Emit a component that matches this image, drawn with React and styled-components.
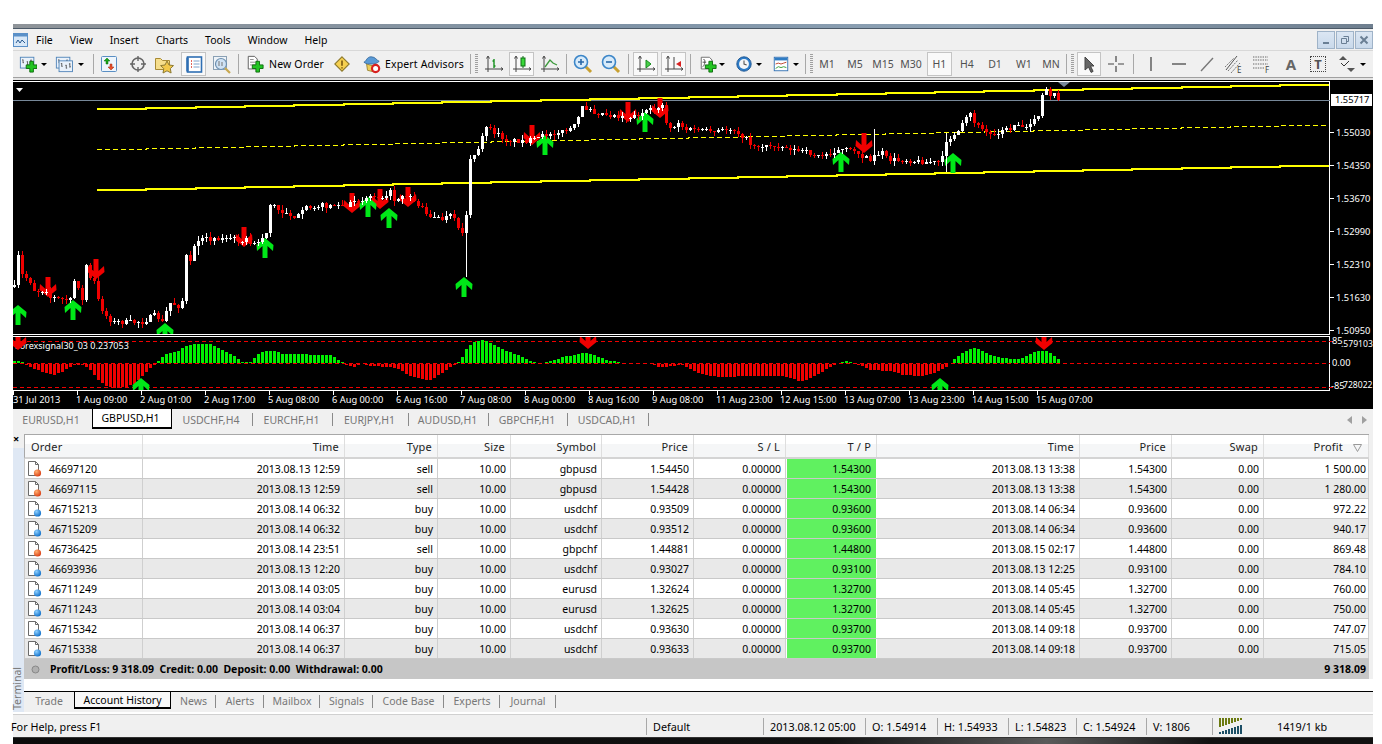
import React from 'react';
import styled, { createGlobalStyle } from 'styled-components';

const GlobalStyle = createGlobalStyle`
  html, body { margin: 0; padding: 0; background: #fff; }
  body { font-family: "Noto Sans", "Open Sans", sans-serif; font-size: 10.5px; color: #000; }
`;

const FONT = '"Noto Sans", "Open Sans", sans-serif';

const Page = styled.div`
  width: 1382px;
  height: 744px;
  box-sizing: border-box;
  padding: 24px 9px 0 13px;
  background: #fff;
  overflow: hidden;
`;

const TopStrip = styled.div`
  height: 4px;
  background: linear-gradient(90deg, #8f9499 0%, #7f93a6 45%, #8ea3b6 70%, #6f7f8f 100%);
  border-bottom: 1px solid #4c5a68;
`;

const MenuBar = styled.div`
  height: 21px;
  display: flex;
  align-items: center;
  background: #f0f0f0;
  border-bottom: 1px solid #d8d8d8;
`;

const AppIcon = styled.div`
  width: 15px;
  height: 18px;
  flex: none;
  margin-right: 8px;
`;

const MenuItem = styled.span`
  font-size: 10.5px;
  margin-right: 17px;
  color: #000;
`;

const WindowBtns = styled.div`
  margin-left: auto;
  display: flex;
  gap: 1px;
`;

const WindowBtn = styled.div`
  width: 18px;
  height: 18px;
  display: flex;
  align-items: center;
  justify-content: center;
  background: linear-gradient(#dbe6f3, #c9d9eb);
  border: 1px solid #9fb3c8;
  box-sizing: border-box;
`;

const Toolbar = styled.div`
  height: 26px;
  display: flex;
  align-items: center;
  background: #f0f0f0;
  border-bottom: 1px solid #a0a0a0;
  box-shadow: 0 2px 0 #e4e4e4;
  margin-bottom: 2px;
`;

const Slot = styled.div`
  width: ${(p) => p.$w}px;
  height: 24px;
  flex: none;
  display: flex;
  align-items: center;
  justify-content: center;
  box-sizing: border-box;
  border: 1px solid ${(p) => (p.$pressed ? '#c4c4c4' : 'transparent')};
  background: ${(p) => (p.$pressed ? '#f9f9f9' : 'transparent')};
`;

const Gap = styled.div`
  width: ${(p) => p.$w}px;
  flex: none;
`;

const Sep = styled.div`
  width: ${(p) => p.$w}px;
  height: 20px;
  flex: none;
  display: flex;
  justify-content: center;
  &::after {
    content: '';
    width: 1px;
    background: #a8a8a8;
  }
`;

const Grip = styled.div`
  width: ${(p) => p.$w}px;
  height: 20px;
  flex: none;
  display: flex;
  justify-content: center;
  &::after {
    content: '';
    width: 3px;
    background: repeating-linear-gradient(#a0a0a0 0 1px, transparent 1px 2px);
  }
`;

const Caret = styled.div`
  width: ${(p) => p.$w}px;
  flex: none;
  display: flex;
  justify-content: center;
  &::after {
    content: '';
    border-left: 3px solid transparent;
    border-right: 3px solid transparent;
    border-top: 3px solid #000;
  }
`;

const ToolLabel = styled.span`
  width: ${(p) => p.$w}px;
  flex: none;
  font-size: 10.5px;
  letter-spacing: 0.15px;
  white-space: nowrap;
`;

const Period = styled(Slot)`
  font-size: 10.5px;
  color: #505050;
`;

const ChartSvg = styled.svg`
  display: block;
  width: 1360px;
  height: 328px;
  background: #000;
`;

const TabRow = styled.div`
  height: 22px;
  display: flex;
  align-items: stretch;
  background: #f0f0f0;
  border-top: 1px solid #000;
  box-sizing: border-box;
`;

const ChartTab = styled.div`
  width: ${(p) => p.$w}px;
  flex: none;
  display: flex;
  align-items: center;
  justify-content: center;
  box-sizing: border-box;
  padding-right: 3px;
  color: ${(p) => (p.$active ? '#000' : '#777')};
  background: ${(p) => (p.$active ? '#fff' : 'transparent')};
  border: ${(p) => (p.$active ? '1px solid #000' : 'none')};
  border-top: none;
  border-bottom-width: ${(p) => (p.$active ? '2px' : '0')};
  height: ${(p) => (p.$active ? '20px' : 'auto')};
  position: relative;
  ${(p) =>
    p.$sep &&
    `&::after {
      content: '';
      position: absolute;
      right: 0;
      top: 4px;
      height: 13px;
      width: 1px;
      background: #8a8a8a;
    }`}
`;

const ScrollArrows = styled.div`
  margin-left: auto;
  display: flex;
  gap: 10px;
  align-items: center;
  padding-right: 6px;
`;

const ScrollArrow = styled.div`
  width: 0;
  height: 0;
  border-top: 4px solid transparent;
  border-bottom: 4px solid transparent;
  ${(p) => (p.$left ? 'border-right: 5px solid #a0a0a0;' : 'border-left: 5px solid #a0a0a0;')}
`;

const Terminal = styled.div`
  display: flex;
  height: 282px;
  background: #f0f0f0;
`;

const Gutter = styled.div`
  width: 11px;
  flex: none;
  display: flex;
  flex-direction: column;
`;

const CloseMark = styled.div`
  height: 18px;
  box-sizing: border-box;
  padding-top: 3px;
  font-size: 11px;
  font-weight: 700;
  line-height: 11px;
  color: #000;
`;

const GutterBody = styled.div`
  flex: 1;
  background: #dfe8f4;
  display: flex;
  align-items: flex-end;
`;

const GutterText = styled.span`
  writing-mode: vertical-rl;
  transform: rotate(180deg);
  font-size: 10.5px;
  color: #777;
  line-height: 9px;
  padding-top: 2px;
`;

const TermMain = styled.div`
  flex: 1;
  display: flex;
  flex-direction: column;
  padding-top: 4px;
`;

const GRID = '118px 202px 93px 73px 91px 92px 92px 91px 203px 92px 92px 105px';

const HeadRow = styled.div`
  width: 1345px;
  height: 25px;
  box-sizing: border-box;
  display: grid;
  grid-template-columns: ${GRID};
  border-top: 1px solid #a8a8a8;
  border-left: 1px solid #a8a8a8;
  border-bottom: 2px solid #d4d4d4;
  background: linear-gradient(#fff 0 40%, #f5f6f7 40% 100%);
`;

const HeadCell = styled.div`
  display: flex;
  align-items: center;
  justify-content: ${(p) => (p.$left ? 'flex-start' : 'flex-end')};
  padding: ${(p) => (p.$left ? '0 0 0 6px' : `0 ${p.$pr || 5}px 0 0`)};
  border-right: 1px solid #dedede;
  font-size: 11px;
  color: #222;
  letter-spacing: 0.2px;
  position: relative;
`;

const SortMark = styled.svg`
  position: absolute;
  right: 6px;
  top: 9px;
`;

const Row = styled.div`
  width: 1345px;
  height: 20px;
  box-sizing: border-box;
  display: grid;
  grid-template-columns: ${GRID};
  background: ${(p) => (p.$alt ? '#e9e9e9' : '#fff')};
  border-bottom: 1px solid #c9c9c9;
  border-left: 1px solid #c9c9c9;
`;

const Cell = styled.div`
  display: flex;
  align-items: center;
  justify-content: flex-end;
  padding-right: ${(p) => p.$pr || 4}px;
  border-right: 1px solid #cfcfcf;
  white-space: nowrap;
`;

const OrderCell = styled(Cell)`
  justify-content: flex-start;
  padding: 0 0 0 2px;
  gap: 7px;
`;

const TpCell = styled(Cell)`
  background: #60f160;
  border-right: 1px solid #fff;
  border-left: 1px solid #fff;
  padding-right: 5px;
`;

const TotalRow = styled.div`
  width: 1345px;
  height: 20px;
  box-sizing: border-box;
  display: flex;
  align-items: center;
  gap: 10px;
  padding: 0 3px 0 7px;
  background: #c6c6c6;
  font-weight: 700;
  font-size: 10.5px;
`;

const TotalRight = styled.span`
  margin-left: auto;
`;

const Filler = styled.div`
  height: 12px;
  background: #fff;
`;

const TermTabs = styled.div`
  height: 21px;
  display: flex;
  border-top: 1px solid #000;
  box-sizing: border-box;
  background: #f0f0f0;
`;

const TermTab = styled.div`
  width: ${(p) => p.$w}px;
  height: ${(p) => (p.$active ? '17px' : '18px')};
  flex: none;
  display: flex;
  align-items: center;
  justify-content: center;
  box-sizing: border-box;
  color: ${(p) => (p.$active ? '#000' : '#777')};
  background: ${(p) => (p.$active ? '#f8f8f8' : 'transparent')};
  ${(p) => p.$active && 'border: 1px solid #000; border-top: none; border-bottom-width: 2px;'}
  position: relative;
  ${(p) =>
    p.$sep &&
    `&::after {
      content: '';
      position: absolute;
      right: 0;
      top: 3px;
      height: 13px;
      width: 1px;
      background: #8a8a8a;
    }`}
`;

const StatusBar = styled.div`
  height: 23px;
  margin-top: 2px;
  display: flex;
  align-items: center;
  background: #f0f0f0;
  border-top: 1px solid #d0d0d0;
  box-sizing: border-box;
`;

const StatusCell = styled.div`
  width: ${(p) => p.$w}px;
  height: 17px;
  flex: ${(p) => (p.$grow ? 1 : 'none')};
  display: flex;
  align-items: center;
  gap: 34px;
  box-sizing: border-box;
  border-left: ${(p) => (p.$first ? 'none' : '1px solid #a8a8a8')};
  margin-left: ${(p) => (p.$first ? '-2px' : '0')};
  padding-left: ${(p) => (p.$first ? '0' : '6px')};
  white-space: nowrap;
  font-size: 10.8px;
`;

const BottomStrip = styled.div`
  height: 7px;
  background: linear-gradient(90deg, #0b0b0b 0%, #111 60%, #5a5a5a 76%, #111 88%, #111 100%);
  border-top: 1px solid #333;
  box-sizing: border-box;
`;

/* ---------- icons ---------- */

const Plus = ({ x, y }) => (
  <path d={`M${x + 4} ${y}h4v4h4v4h-4v4h-4v-4h-4v-4h4z`} fill="#22c422" stroke="#0a6a0a" strokeWidth="1" />
);

const Axes = ({ color = '#444' }) => (
  <path d="M4 3v15M1 15h18M2.5 4.5L4 2l1.5 2.5M17 13.5l2 1.5-2 1.5" fill="none" stroke={color} strokeWidth="1" />
);

const Svg = ({ children, w = 20, h = 20 }) => (
  <svg width={w} height={h} viewBox={`0 0 ${w} ${h}`}>
    {children}
  </svg>
);

const TChart = ({ x = 0, y = 0 }) => (
  <g transform={`translate(${x} ${y})`} fill="none" stroke="#35638f" strokeWidth="1">
    <rect x="0.5" y="0.5" width="15" height="12" fill="#eaf2fb" stroke="#4f83b8" />
    <path d="M3.5 3v4M2.5 3.5h1M3.5 6.5h1M8.5 5v4M7.5 5.5h1M8.5 8.5h1M12.5 3v5M11.5 4h1M12.5 7h1" stroke="#555" />
  </g>
);

const NewChartIcon = () => (
  <Svg>
    <TChart x={1} y={2} />
    <Plus x={8} y={7} />
  </Svg>
);

const ProfilesIcon = () => (
  <Svg>
    <TChart x={1} y={2} />
    <TChart x={4} y={6} />
  </Svg>
);

const MarketIcon = () => (
  <Svg>
    <rect x="2.5" y="2.5" width="15" height="15" rx="1" fill="#eef5fc" stroke="#5a8fc4" />
    <path d="M8 4l3 3H9v3H7V7H5z" fill="#18a818" stroke="#0a6a0a" strokeWidth=".5" />
    <path d="M12 16l-3-3h2v-3h2v3h2z" fill="#e8502a" stroke="#a02a10" strokeWidth=".5" />
  </Svg>
);

const CrossIcon = () => (
  <Svg>
    <circle cx="10" cy="10" r="6" fill="none" stroke="#666" strokeWidth="1.6" />
    <path d="M10 2v5M10 13v5M2 10h5M13 10h5" stroke="#666" strokeWidth="1.4" />
  </Svg>
);

const NavigatorIcon = () => (
  <Svg>
    <path d="M1.5 4.5h5l2 2h7v9h-14z" fill="#f6de8c" stroke="#a88a34" />
    <path d="M13 7l2 4 4.5.6-3.2 3 .8 4.4-4.1-2.2L9 19l.8-4.4-3.2-3L11 11z" fill="#f2c84a" stroke="#8d7a32" />
  </Svg>
);

const TerminalIcon = () => (
  <Svg>
    <rect x="3.5" y="3" width="14" height="15" fill="#fff" stroke="#2f6fb3" strokeWidth="1.6" />
    <path d="M3.5 3.5v14" stroke="#2f6fb3" strokeWidth="2.5" />
    <path d="M7 7h1M7 10h1M7 13h1" stroke="#d8362a" strokeWidth="1.4" />
    <path d="M9.5 7h6M9.5 10h6M9.5 13h6" stroke="#7aa2cc" />
  </Svg>
);

const TesterIcon = () => (
  <Svg>
    <rect x="2.5" y="2.5" width="13" height="13" fill="#eef3f8" stroke="#8aa0b4" />
    <circle cx="10" cy="10" r="5.5" fill="#cfe2f4" stroke="#6d8fae" strokeWidth="1.2" />
    <path d="M8 7v5M11 8v4" stroke="#777" />
    <path d="M14 14l5 5" stroke="#c8a850" strokeWidth="2.2" />
  </Svg>
);

const DocShape = ({ x = 0, y = 0 }) => (
  <g transform={`translate(${x} ${y})`}>
    <path d="M1.5 1.5h7l3 3v11h-10z" fill="#fff" stroke="#555" />
    <path d="M3.5 5h4M3.5 8h6M3.5 11h6" stroke="#888" />
  </g>
);

const NewOrderIcon = () => (
  <Svg>
    <DocShape x={1} y={0} />
    <Plus x={7} y={7} />
  </Svg>
);

const AlertIcon = () => (
  <Svg>
    <path d="M10 2l8 8-8 8-8-8z" fill="#f6d050" stroke="#8e7a2c" strokeWidth="1.2" />
    <path d="M10 6v6M10 13.5v1.6" stroke="#7a5a10" strokeWidth="1.8" />
  </Svg>
);

const ExpertIcon = () => (
  <Svg>
    <path d="M4 10l1 7 8 2 1-6z" fill="#f0cf58" stroke="#9a8530" />
    <path d="M1 8c3-1 3-6 8-6s6 4 9 5c-2 2-5 3-8 3S3 10 1 8z" fill="#5a9ad6" stroke="#3c6d9e" />
    <circle cx="14" cy="15" r="4" fill="#fff" stroke="#d82020" strokeWidth="2.4" />
  </Svg>
);

const BarChartIcon = () => (
  <Svg>
    <Axes />
    <path d="M10 5v9M8.5 7H10M10 12h1.5" stroke="#16901e" strokeWidth="1.4" fill="none" />
  </Svg>
);

const CandleIcon = () => (
  <Svg>
    <Axes />
    <path d="M11 2v12" stroke="#0e6e14" />
    <rect x="9" y="4" width="4" height="8" fill="#38d838" stroke="#0e6e14" />
  </Svg>
);

const LineIcon = () => (
  <Svg>
    <Axes />
    <path d="M5 13l5-7 3 3 4 2" fill="none" stroke="#3c9a3c" strokeWidth="1.3" />
  </Svg>
);

const ZoomIcon = ({ minus }) => (
  <Svg>
    <path d="M12 12l6 6" stroke="#c8a030" strokeWidth="3" />
    <circle cx="8" cy="8" r="6.5" fill="#d8ebfa" stroke="#3c86c8" strokeWidth="1.6" />
    <path d={minus ? 'M5 8h6' : 'M5 8h6M8 5v6'} stroke="#2868a8" strokeWidth="1.6" />
  </Svg>
);

const ShiftIcon = () => (
  <Svg>
    <Axes />
    <path d="M10 6l5 4-5 4z" fill="#48d048" stroke="#168a1e" />
  </Svg>
);

const AutoScrollIcon = () => (
  <Svg>
    <Axes />
    <path d="M10 3v12" stroke="#444" />
    <path d="M12 10l5-3v6z" fill="#d82020" />
  </Svg>
);

const IndicatorIcon = () => (
  <Svg>
    <path d="M2.5 2.5h9l3 3v10h-12z" fill="#fff" stroke="#666" />
    <path d="M5 5c3-1 1 8-1 8M4 8h4" stroke="#444" fill="none" />
    <Plus x={7} y={7} />
  </Svg>
);

const ClockIcon = () => (
  <Svg>
    <circle cx="10" cy="10" r="8" fill="#2d7cc8" stroke="#1b5490" />
    <circle cx="10" cy="10" r="5.5" fill="#f4f6f8" />
    <path d="M10 6v4l3 1" fill="none" stroke="#555" strokeWidth="1.2" />
  </Svg>
);

const TemplateIcon = () => (
  <Svg>
    <rect x="2.5" y="2.5" width="15" height="15" fill="#fff" stroke="#2f6fb3" />
    <rect x="3" y="3" width="14" height="3" fill="#2f7cc4" />
    <path d="M4 10l3-1 3 1 3-1 3-1" fill="none" stroke="#b83a20" />
    <path d="M4 15l3-2 3 1 3-1 3 1" fill="none" stroke="#2f9a2f" />
  </Svg>
);

const PointerIcon = () => (
  <Svg>
    <path d="M6 3v13l3.5-3 2.6 5.4 2-1-2.6-5.4H15z" fill="#666" stroke="#444" />
  </Svg>
);

const ThinCrossIcon = () => (
  <Svg>
    <path d="M10 2v6M10 12v6M2 10h6M12 10h6" stroke="#444" strokeWidth="1.2" />
  </Svg>
);

const VLineIcon = () => (
  <Svg>
    <path d="M10 3v14" stroke="#555" strokeWidth="1.4" />
  </Svg>
);

const HLineIcon = () => (
  <Svg>
    <path d="M3 10h14" stroke="#555" strokeWidth="1.4" />
  </Svg>
);

const TrendIcon = () => (
  <Svg>
    <path d="M4 17L16 4" stroke="#777" strokeWidth="1.4" />
  </Svg>
);

const EquiIcon = () => (
  <Svg w={24}>
    <path d="M2 13L11 4M5 17L15 6M8 19L17 9" stroke="#777" strokeWidth="1" strokeDasharray="2 1" />
    <path d="M3 16L14 2" stroke="#555" />
    <text x="14" y="19" fontSize="8" fontFamily={FONT} fill="#444">E</text>
  </Svg>
);

const FiboIcon = () => (
  <Svg w={24}>
    <path d="M3 3h15M3 6h15M3 10h15M3 14h11" stroke="#666" strokeDasharray="1.4 1" />
    <text x="15" y="19" fontSize="8" fontFamily={FONT} fill="#444">F</text>
  </Svg>
);

const LetterA = styled.span`
  font-size: 15px;
  font-weight: 700;
  color: #666;
`;

const LetterT = styled.span`
  font-size: 13px;
  font-weight: 700;
  color: #555;
  width: 14px;
  height: 14px;
  display: flex;
  align-items: center;
  justify-content: center;
  border: 1px dotted #444;
`;

const ArrowsIcon = () => (
  <Svg>
    <path d="M6 2l4 4H2zM14 18l4-4h-8z" fill="#555" />
    <path d="M4 9l3 3 5-5" fill="none" stroke="#333" strokeWidth="1" />
  </Svg>
);

const AppGlyph = () => (
  <svg width="15" height="18" viewBox="0 0 15 18" style={{ display: 'block' }}>
    <rect x=".5" y="2.5" width="14" height="13" fill="#d7e7f7" stroke="#5a90c8" />
    <rect x=".5" y="2.5" width="14" height="3" fill="#5a90c8" />
    <path d="M3 12l2-3 2 3 2-3 3 3" fill="none" stroke="#2a5a90" />
  </svg>
);

const OrderIcon = ({ buy }) => (
  <svg width="15" height="18" viewBox="0 0 15 18">
    <defs>
      <radialGradient id={buy ? 'ballB' : 'ballS'} cx="35%" cy="30%" r="75%">
        <stop offset="0%" stopColor={buy ? '#8fd0ff' : '#ffb070'} />
        <stop offset="100%" stopColor={buy ? '#0a6cc8' : '#d83a10'} />
      </radialGradient>
    </defs>
    <path d="M1.5 1.5h7l3 3v11h-10z" fill="#fff" stroke="#6a6a6a" />
    <path d="M8.5 1.5v3h3" fill="none" stroke="#6a6a6a" />
    <circle cx="10.5" cy="13" r="3.6" fill={`url(#${buy ? 'ballB' : 'ballS'})`} />
  </svg>
);

const VolumeIcon = () => (
  <svg width="24" height="16" viewBox="0 0 24 16">
    {[0, 1, 2, 3, 4, 5, 6, 7].map((i) => (
      <g key={i}>
        <rect x={i * 3} y="0" width="2" height={9 - i} fill="#6b7a10" />
        <rect x={i * 3} y={14 - i} width="2" height={2 + i} fill="#1c4f66" />
      </g>
    ))}
  </svg>
);

/* ---------- chart data ---------- */

// rough price path read off the picture: [x, y of close]
const PATH = [
  [13,287],[17,256],[21,275],[25,278],[29,281],[33,290],[37,291],[41,290],[45,290],[49,298],[53,298],[61,299],[69,300],[73,281],
  [77,286],[81,301],[85,265],[89,279],[93,282],[97,300],[101,309],[105,316],[109,320],[113,322],[125,322],[141,322],[145,320],
  [149,317],[153,315],[157,318],[161,322],[165,312],[169,303],[173,304],[177,306],[181,301],[185,256],[189,263],[193,245],[197,243],
  [201,240],[213,238],[233,239],[245,240],[253,245],[261,238],[265,232],[269,205],[273,206],[277,210],[285,212],[290,215],[296,217],
  [305,208],[312,206],[330,205],[345,207],[358,200],[365,198],[370,195],[376,197],[389,192],[393,200],[400,195],[408,195],[420,208],
  [425,212],[430,217],[440,220],[450,215],[456,225],[461,232],[465,215],[469,158],[473,157],[477,150],[481,137],[485,125],[489,130],
  [495,134],[505,140],[520,141],[535,140],[545,134],[560,132],[570,128],[575,125],[580,108],[590,108],[593,112],[610,115],[630,117],
  [645,112],[652,110],[656,108],[660,100],[664,120],[668,128],[672,127],[676,121],[684,130],[700,129],[710,133],[720,131],[730,128],
  [744,138],[752,146],[777,146],[800,151],[813,155],[820,157],[827,153],[841,150],[853,150],[860,155],[868,160],[873,155],[881,153],
  [887,160],[900,160],[940,163],[945,140],[950,138],[957,133],[965,118],[968,113],[975,125],[985,132],[990,135],[995,133],[1000,129],
  [1005,130],[1010,128],[1015,122],[1020,127],[1030,122],[1036,120],[1041,97],[1045,90],[1049,97],[1053,91],[1057,100],
];

const lerp = (pts, x) => {
  for (let i = 1; i < pts.length; i++) {
    if (x <= pts[i][0]) {
      const [x0, y0] = pts[i - 1];
      const [x1, y1] = pts[i];
      return y0 + ((y1 - y0) * (x - x0)) / (x1 - x0);
    }
  }
  return pts[pts.length - 1][1];
};

let seed = 7;
const rnd = () => {
  seed = (seed * 16807) % 2147483647;
  return seed / 2147483647;
};

const TALL = { 465: { low: 277 }, 873: { high: 129 }, 945: { high: 133, low: 172 }, 197: { low: 255 } };

const CANDLES = [];
for (let x = 13, prev = 287; x <= 1057; x += 4) {
  const close = Math.round(lerp(PATH, x) + (rnd() - 0.5) * 5);
  const top = Math.min(prev, close);
  const bottom = Math.max(prev, close);
  const t = TALL[x] || {};
  CANDLES.push({
    x,
    top,
    h: Math.max(bottom - top, 1),
    up: close <= prev,
    high: t.high || top - Math.round(rnd() * 5),
    low: t.low || bottom + Math.round(rnd() * 5),
  });
  prev = close;
}

const HIST_POINTS = [
  [13,2],[21,1],[25,-1],[33,-5],[41,-8],[53,-11],[61,-8],[69,-3],[73,-1],[81,-1],[89,-6],[97,-16],[105,-22],[113,-24],[125,-23],[133,-20],
  [141,-12],[149,-4],[153,-1],[157,2],[165,9],[177,12],[185,17],[193,19],[209,19],[221,13],[233,7],[241,1],[249,1],[257,9],[265,12],
  [273,12],[281,9],[329,8],[337,3],[345,-1],[353,-3],[361,0],[369,-2],[389,-3],[396,-4],[408,-12],[428,-17],[436,-12],[448,-4],[456,0],
  [462,7],[466,16],[474,22],[482,23],[498,15],[514,9],[530,1],[538,0],[546,1],[562,6],[582,10],[590,9],[606,3],[622,0],[650,0],[656,-3],
  [664,-3],[680,-1],[688,-5],[696,-9],[716,-13],[726,-13],[746,-12],[782,-12],[798,-17],[806,-16],[822,-7],[834,-1],[842,1],[846,2],
  [850,1],[858,-1],[870,-6],[890,-7],[902,-11],[922,-12],[938,-7],[946,-2],[950,1],[958,8],[970,15],[978,14],[990,7],[1010,4],[1018,4],
  [1030,9],[1034,12],[1046,12],[1058,3],
];

const HIST = [];
for (let x = 13; x <= 1058; x += 4) HIST.push({ x, v: Math.round(lerp(HIST_POINTS, x)) });

const ARROWS_DOWN = [[48,277],[96,259],[244,227],[352,193],[380,189],[408,187],[532,125],[628,102],[660,98],[864,133]];
const ARROWS_UP = [[18,305],[73,300],[165,323],[265,238],[368,197],[389,208],[464,277],[545,135],[645,112],[841,152],[953,153]];

const PRICES = [['1.55030',136],['1.54350',169],['1.53670',202],['1.52990',235],['1.52310',268],['1.51630',301],['1.50950',334]];
const TIMES = [
  ['1 Aug 09:00',76],['2 Aug 01:00',140],['2 Aug 17:00',204],['5 Aug 08:00',268],['6 Aug 00:00',332],['6 Aug 16:00',396],['7 Aug 08:00',460],
  ['8 Aug 00:00',524],['8 Aug 16:00',588],['9 Aug 08:00',652],['11 Aug 23:00',716],['12 Aug 15:00',780],['13 Aug 07:00',844],['13 Aug 23:00',908],
  ['14 Aug 15:00',972],['15 Aug 07:00',1036],
];

const stepped = (y0, y1) => {
  let d = '';
  for (let k = 0; k < 25; k++) {
    const x = 97 + k * 49.3;
    const y = Math.round(y0 + ((y1 - y0) * k) / 24.5);
    d += `${k ? 'L' : 'M'}${x} ${y}L${x + 49.3} ${y}`;
  }
  return d;
};

const downArrow = (x, y) =>
  `${x - 2.5},${y} ${x + 2.5},${y} ${x + 2.5},${y + 12} ${x + 8},${y + 7} ${x + 8.5},${y + 13} ${x},${y + 20} ${x - 8.5},${y + 13} ${x - 8},${y + 7} ${x - 2.5},${y + 12}`;
const upArrow = (x, y) =>
  `${x - 2.5},${y + 20} ${x + 2.5},${y + 20} ${x + 2.5},${y + 8} ${x + 8},${y + 13} ${x + 8.5},${y + 7} ${x},${y} ${x - 8.5},${y + 7} ${x - 8},${y + 13} ${x - 2.5},${y + 8}`;

const Chart = () => (
  <ChartSvg viewBox="13 80 1360 328" fontFamily={FONT} fontSize="9.3">
    <defs>
      <clipPath id="mainClip"><rect x="13" y="82" width="1316" height="252" /></clipPath>
      <clipPath id="subClip"><rect x="13" y="337" width="1316" height="53" /></clipPath>
    </defs>
    <g shapeRendering="crispEdges">
      <path d="M13 81.5H1329.5V334.5H13" fill="none" stroke="#fff" />
      <path d="M13 336.5H1329.5V390.5H13" fill="none" stroke="#fff" />
      <path d="M13 100.5H1330" stroke="#778899" />
      <g clipPath="url(#mainClip)">
        <path d={stepped(109, 85)} fill="none" stroke="#ffff00" strokeWidth="2" />
        <path d={stepped(190, 166)} fill="none" stroke="#ffff00" strokeWidth="2" />
        <path d={stepped(149, 124)} fill="none" stroke="#ffff00" strokeWidth="1" strokeDasharray="5 3" />
      </g>
    </g>
    <g clipPath="url(#mainClip)">
      {ARROWS_DOWN.map(([x, y]) => <polygon key={x} points={downArrow(x, y)} fill="#f00000" />)}
      {ARROWS_UP.map(([x, y]) => <polygon key={x} points={upArrow(x, y)} fill="#00e818" />)}
      <g shapeRendering="crispEdges">
        {CANDLES.map((c) => (
          <g key={c.x} fill={c.up ? '#fff' : '#f00000'}>
            <rect x={c.x + 1} y={c.high} width="1" height={c.low - c.high} />
            <rect x={c.x} y={c.top} width="3" height={c.h} />
          </g>
        ))}
      </g>
    </g>
    <polygon points="16,88 23,88 19.5,92" fill="#fff" />
    <polygon points="1058,82 1070,82 1064,87" fill="#778899" />
    <g shapeRendering="crispEdges">
      <rect x="1331" y="94" width="41" height="12" fill="#fff" />
      {[132, 165, 198, 231, 264, 297, 330].map((y) => <rect key={y} x="1330" y={y} width="4" height="1" fill="#fff" />)}
    </g>
    <text x="1335" y="103" fill="#000">1.55717</text>
    {PRICES.map(([t, y]) => <text key={t} x="1336" y={y} fill="#fff">{t}</text>)}

    <g shapeRendering="crispEdges">
      <g stroke="#f00000" strokeDasharray="4 3">
        <path d="M13 341.5H1334" />
        <path d="M13 363.5H1330" />
        <path d="M13 387.5H1334" />
      </g>
      {HIST.map((b) => (
        <rect
          key={b.x}
          x={b.x}
          y={b.v >= 0 ? 363 - b.v : 364}
          width="3"
          height={Math.abs(b.v)}
          fill={b.v >= 0 ? '#00f000' : '#f00000'}
        />
      ))}
    </g>
    <text x="15" y="349" fontSize="9" fill="#fff">Forexsignal30_03 0.237053</text>
    <g clipPath="url(#subClip)">
      {[[18,330],[588,329],[1044,330]].map(([x, y]) => <polygon key={x} points={downArrow(x, y)} fill="#f00000" />)}
      {[[141,378],[940,378]].map(([x, y]) => <polygon key={x} points={upArrow(x, y)} fill="#00e818" />)}
    </g>
    <text x="1332" y="344" fill="#fff">85</text>
    <text x="1341" y="347" fontSize="8.6" fill="#fff">.579103</text>
    <text x="1332" y="366" fill="#fff">0.00</text>
    <text x="1331" y="389" fill="#fff">-85</text>
    <text x="1343" y="388" fontSize="8.6" fill="#fff">728022</text>

    <g shapeRendering="crispEdges" fill="#fff">
      {TIMES.map(([t, x]) => <rect key={t} x={x + 1} y="391" width="1" height="4" />)}
      <rect x="13" y="391" width="1" height="4" />
    </g>
    <text x="13" y="403" fill="#fff">31 Jul 2013</text>
    {TIMES.map(([t, x]) => <text key={t} x={x} y="403" fill="#fff">{t}</text>)}
  </ChartSvg>
);

/* ---------- table data ---------- */

const HEAD = ['Time', 'Type', 'Size', 'Symbol', 'Price', 'S / L', 'T / P', 'Time', 'Price', 'Swap'];

const ROWS = [
  ['46697120','2013.08.13 12:59','sell','gbpusd','1.54450','1.54300','2013.08.13 13:38','1 500.00'],
  ['46697115','2013.08.13 12:59','sell','gbpusd','1.54428','1.54300','2013.08.13 13:38','1 280.00'],
  ['46715213','2013.08.14 06:32','buy','usdchf','0.93509','0.93600','2013.08.14 06:34','972.22'],
  ['46715209','2013.08.14 06:32','buy','usdchf','0.93512','0.93600','2013.08.14 06:34','940.17'],
  ['46736425','2013.08.14 23:51','sell','gbpchf','1.44881','1.44800','2013.08.15 02:17','869.48'],
  ['46693936','2013.08.13 12:20','buy','usdchf','0.93027','0.93100','2013.08.13 12:25','784.10'],
  ['46711249','2013.08.14 03:05','buy','eurusd','1.32624','1.32700','2013.08.14 05:45','760.00'],
  ['46711243','2013.08.14 03:04','buy','eurusd','1.32625','1.32700','2013.08.14 05:45','750.00'],
  ['46715342','2013.08.14 06:37','buy','usdchf','0.93630','0.93700','2013.08.14 09:18','747.07'],
  ['46715338','2013.08.14 06:37','buy','usdchf','0.93633','0.93700','2013.08.14 09:18','715.05'],
];

const CHART_TABS = [
  ['EURUSD,H1', 79],
  ['GBPUSD,H1', 80, true],
  ['USDCHF,H4', 81],
  ['EURCHF,H1', 80],
  ['EURJPY,H1', 76],
  ['AUDUSD,H1', 80],
  ['GBPCHF,H1', 79],
  ['USDCAD,H1', 81],
];

const TERM_TABS = [
  ['Trade', 50],
  ['Account History', 97, true],
  ['News', 45],
  ['Alerts', 48],
  ['Mailbox', 56],
  ['Signals', 53],
  ['Code Base', 71],
  ['Experts', 56],
  ['Journal', 56],
];

const MENU = ['File', 'View', 'Insert', 'Charts', 'Tools', 'Window', 'Help'];

export default function App() {
  return (
    <Page>
      <GlobalStyle />
      <TopStrip />
      <MenuBar>
        <AppIcon><AppGlyph /></AppIcon>
        {MENU.map((m) => <MenuItem key={m}>{m}</MenuItem>)}
        <WindowBtns>
          <WindowBtn>
            <svg width="10" height="10" viewBox="0 0 10 10"><path d="M2 8h6" stroke="#6a7f94" strokeWidth="2" /></svg>
          </WindowBtn>
          <WindowBtn>
            <svg width="10" height="10" viewBox="0 0 10 10"><path d="M3.5 1.5h5v5h-2M1.5 3.5h5v5h-5z" fill="none" stroke="#6a7f94" /></svg>
          </WindowBtn>
          <WindowBtn>
            <svg width="10" height="10" viewBox="0 0 10 10"><path d="M1.5 1.5l7 7M8.5 1.5l-7 7" stroke="#6a7f94" strokeWidth="2" /></svg>
          </WindowBtn>
        </WindowBtns>
      </MenuBar>

      <Toolbar>
        <Gap $w={5} />
        <Slot $w={20}><NewChartIcon /></Slot>
        <Caret $w={12} />
        <Gap $w={4} />
        <Slot $w={20}><ProfilesIcon /></Slot>
        <Caret $w={14} />
        <Sep $w={10} />
        <Slot $w={22}><MarketIcon /></Slot>
        <Gap $w={4} />
        <Slot $w={28}><CrossIcon /></Slot>
        <Slot $w={24}><NavigatorIcon /></Slot>
        <Gap $w={5} />
        <Slot $w={25} $pressed><TerminalIcon /></Slot>
        <Slot $w={30}><TesterIcon /></Slot>
        <Sep $w={4} />
        <Gap $w={5} />
        <Slot $w={20}><NewOrderIcon /></Slot>
        <Gap $w={4} />
        <ToolLabel $w={56}>New Order</ToolLabel>
        <Gap $w={7} />
        <Slot $w={20}><AlertIcon /></Slot>
        <Gap $w={10} />
        <Slot $w={20}><ExpertIcon /></Slot>
        <Gap $w={3} />
        <ToolLabel $w={78}>Expert Advisors</ToolLabel>
        <Gap $w={5} />
        <Sep $w={5} />
        <Grip $w={6} />
        <Gap $w={3} />
        <Slot $w={24}><BarChartIcon /></Slot>
        <Gap $w={3} />
        <Slot $w={25} $pressed><CandleIcon /></Slot>
        <Gap $w={4} />
        <Slot $w={24}><LineIcon /></Slot>
        <Sep $w={8} />
        <Gap $w={1} />
        <Slot $w={24}><ZoomIcon /></Slot>
        <Gap $w={4} />
        <Slot $w={24}><ZoomIcon minus /></Slot>
        <Gap $w={1} />
        <Sep $w={8} />
        <Gap $w={1} />
        <Slot $w={25} $pressed><ShiftIcon /></Slot>
        <Gap $w={3} />
        <Slot $w={25} $pressed><AutoScrollIcon /></Slot>
        <Sep $w={8} />
        <Gap $w={4} />
        <Slot $w={20}><IndicatorIcon /></Slot>
        <Caret $w={8} />
        <Gap $w={8} />
        <Slot $w={20}><ClockIcon /></Slot>
        <Caret $w={10} />
        <Gap $w={7} />
        <Slot $w={20}><TemplateIcon /></Slot>
        <Caret $w={10} />
        <Sep $w={8} />
        <Grip $w={4} />
        <Period $w={28}>M1</Period>
        <Period $w={28}>M5</Period>
        <Period $w={28}>M15</Period>
        <Period $w={28}>M30</Period>
        <Gap $w={2} />
        <Period $w={25} $pressed>H1</Period>
        <Gap $w={1} />
        <Period $w={28}>H4</Period>
        <Period $w={28}>D1</Period>
        <Gap $w={1} />
        <Period $w={28}>W1</Period>
        <Period $w={26}>MN</Period>
        <Sep $w={5} />
        <Grip $w={6} />
        <Gap $w={2} />
        <Slot $w={24} $pressed><PointerIcon /></Slot>
        <Slot $w={30}><ThinCrossIcon /></Slot>
        <Sep $w={4} />
        <Gap $w={1} />
        <Slot $w={30}><VLineIcon /></Slot>
        <Slot $w={26}><HLineIcon /></Slot>
        <Slot $w={30}><TrendIcon /></Slot>
        <Slot $w={26}><EquiIcon /></Slot>
        <Slot $w={28}><FiboIcon /></Slot>
        <Slot $w={30}><LetterA>A</LetterA></Slot>
        <Slot $w={24}><LetterT>T</LetterT></Slot>
        <Gap $w={4} />
        <Slot $w={26}><ArrowsIcon /></Slot>
        <Caret $w={6} />
      </Toolbar>

      <Chart />

      <TabRow>
        {CHART_TABS.map(([t, w, active], i) => (
          <ChartTab key={t} $w={w} $active={active} $sep={i > 1}>{t}</ChartTab>
        ))}
        <ScrollArrows>
          <ScrollArrow $left />
          <ScrollArrow />
        </ScrollArrows>
      </TabRow>

      <Terminal>
        <Gutter>
          <CloseMark>×</CloseMark>
          <GutterBody>
            <GutterText>Terminal</GutterText>
          </GutterBody>
        </Gutter>
        <TermMain>
          <HeadRow>
            <HeadCell $left>Order</HeadCell>
            {HEAD.map((h, i) => <HeadCell key={i}>{h}</HeadCell>)}
            <HeadCell $pr={25}>
              Profit
              <SortMark width="9" height="8" viewBox="0 0 9 8">
                <path d="M.5 .5h8L4.5 7.5z" fill="none" stroke="#999" />
              </SortMark>
            </HeadCell>
          </HeadRow>
          {ROWS.map((r, i) => (
            <Row key={r[0]} $alt={i % 2 === 1}>
              <OrderCell><OrderIcon buy={r[2] === 'buy'} />{r[0]}</OrderCell>
              <Cell>{r[1]}</Cell>
              <Cell>{r[2]}</Cell>
              <Cell>10.00</Cell>
              <Cell>{r[3]}</Cell>
              <Cell>{r[4]}</Cell>
              <Cell>0.00000</Cell>
              <TpCell>{r[5]}</TpCell>
              <Cell>{r[6]}</Cell>
              <Cell>{r[5]}</Cell>
              <Cell>0.00</Cell>
              <Cell $pr={2}>{r[7]}</Cell>
            </Row>
          ))}
          <TotalRow>
            <svg width="9" height="9" viewBox="0 0 9 9">
              <circle cx="4.5" cy="4.5" r="3.5" fill="#b0b0b0" stroke="#888" />
            </svg>
            <span>Profit/Loss: 9 318.09 &nbsp;Credit: 0.00 &nbsp;Deposit: 0.00 &nbsp;Withdrawal: 0.00</span>
            <TotalRight>9 318.09</TotalRight>
          </TotalRow>
          <Filler />
          <TermTabs>
            {TERM_TABS.map(([t, w, active], i) => (
              <TermTab key={t} $w={w} $active={active} $sep={i > 1}>{t}</TermTab>
            ))}
          </TermTabs>
        </TermMain>
      </Terminal>

      <StatusBar>
        <StatusCell $w={635} $first>For Help, press F1</StatusCell>
        <StatusCell $w={117}>Default</StatusCell>
        <StatusCell $w={102}>2013.08.12 05:00</StatusCell>
        <StatusCell $w={72}>O: 1.54914</StatusCell>
        <StatusCell $w={71}>H: 1.54933</StatusCell>
        <StatusCell $w={68}>L: 1.54823</StatusCell>
        <StatusCell $w={70}>C: 1.54924</StatusCell>
        <StatusCell $w={66}>V: 1806</StatusCell>
        <StatusCell $grow><VolumeIcon />1419/1 kb</StatusCell>
      </StatusBar>
      <BottomStrip />
    </Page>
  );
}
